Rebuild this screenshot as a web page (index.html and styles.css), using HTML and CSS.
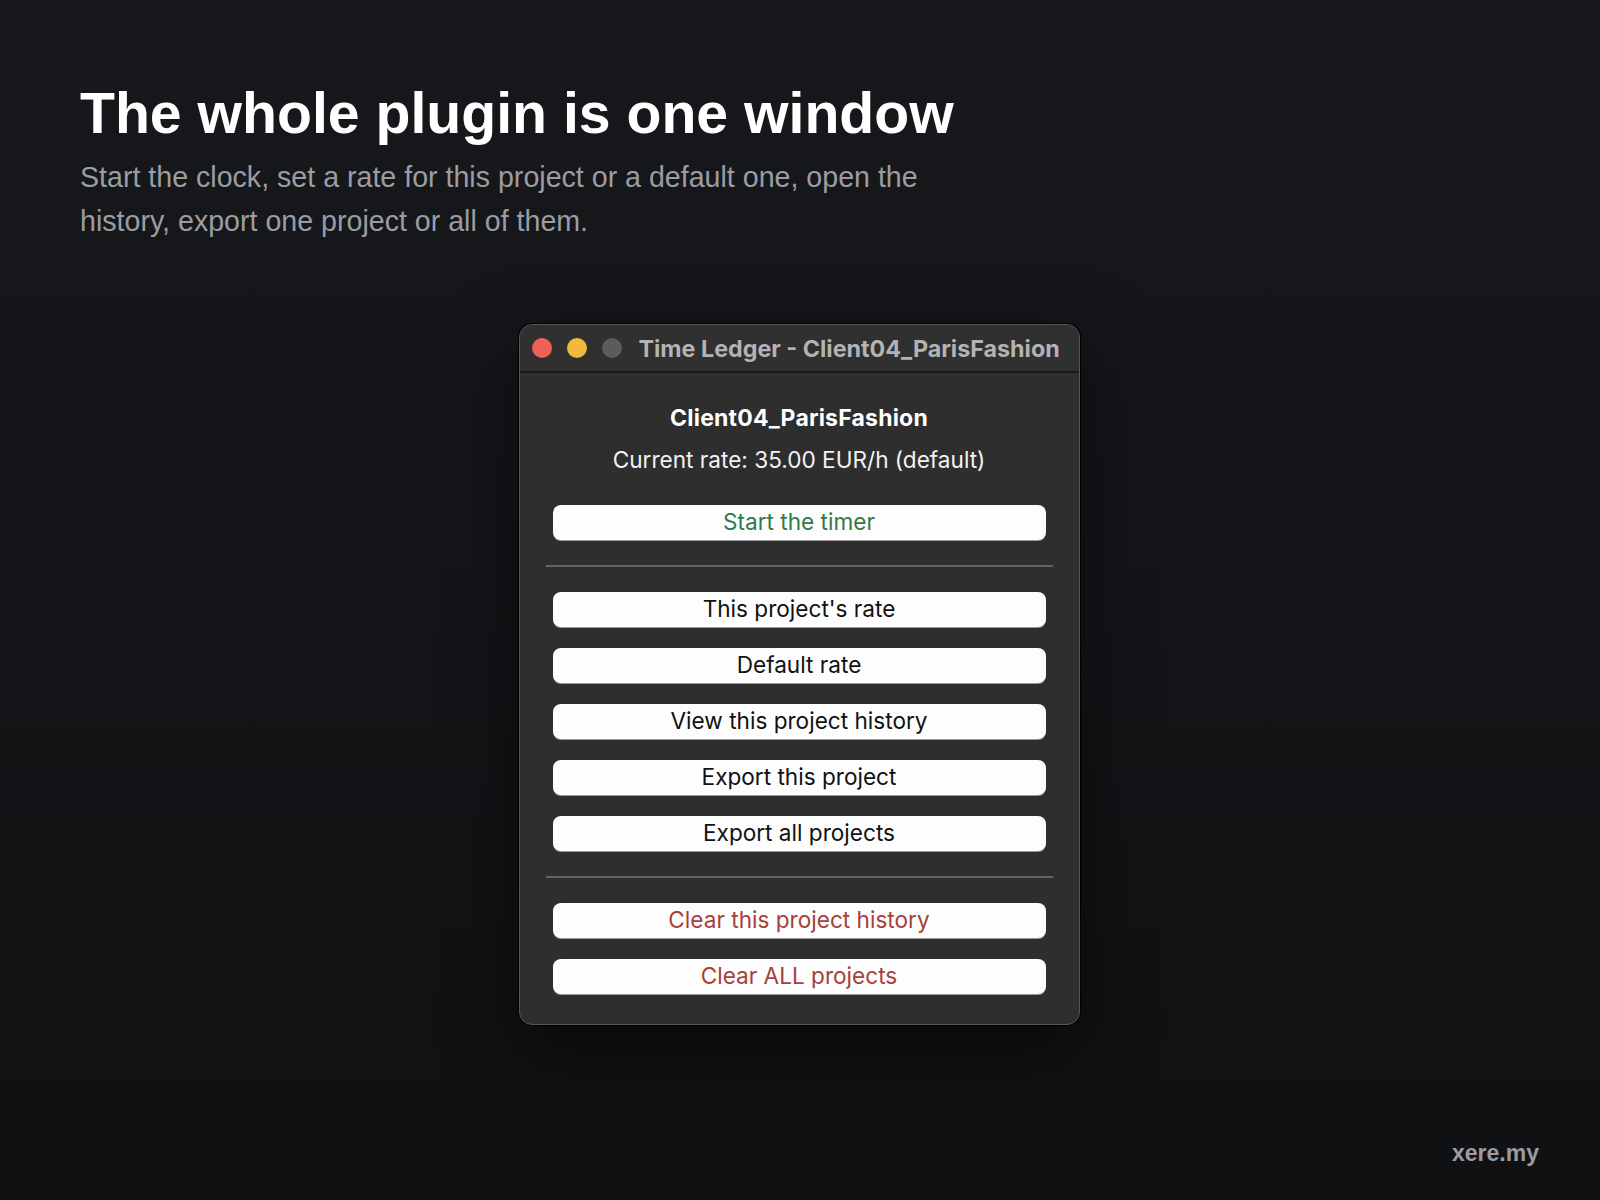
FILE: index.html
```html
<!DOCTYPE html>
<html lang="en">

<head>
  <meta charset="UTF-8">
  <meta name="viewport" content="width=device-width, initial-scale=1.0">
  <title>Time Ledger</title>
  <link rel="stylesheet" href="styles.css">
</head>

<body>
  <div class="page">
    <header class="intro">
      <h1 class="headline">The whole plugin is one window</h1>
      <p class="lead">Start the clock, set a rate for this project or a default one, open the history, export one project or all of them.</p>
    </header>

    <div class="stage">
      <div class="window">
        <div class="titlebar">
          <span class="light red"></span>
          <span class="light yellow"></span>
          <span class="light off"></span>
          <span class="window-title">Time Ledger - Client04_ParisFashion</span>
        </div>
        <div class="panel">
          <div class="project">Client04_ParisFashion</div>
          <div class="rate">Current rate: 35.00 EUR/h (default)</div>

          <button class="btn start">Start the timer</button>
          <hr class="sep">

          <div class="group">
            <button class="btn">This project's rate</button>
            <button class="btn">Default rate</button>
            <button class="btn">View this project history</button>
            <button class="btn">Export this project</button>
            <button class="btn">Export all projects</button>
          </div>
          <hr class="sep">

          <div class="group">
            <button class="btn danger">Clear this project history</button>
            <button class="btn danger">Clear ALL projects</button>
          </div>
        </div>
      </div>
    </div>

    <footer class="brand">xere.my</footer>
  </div>
</body>

</html>
```

FILE: styles.css
```css
html,
body {
  height: 100%;
}

body {
  margin: 0;
  background: linear-gradient(180deg, #17181c 0%, #141518 50%, #101112 100%);
  font-family: "Liberation Sans", Arial, sans-serif;
  color: #fff;
}

.page {
  position: relative;
  height: 1200px;
  box-sizing: border-box;
  padding: 82px 80px 0;
}

.headline {
  margin: 0;
  font-size: 57.2px;
  line-height: 63px;
  font-weight: 700;
}

.lead {
  margin: 10px 0 0;
  max-width: 900px;
  font-size: 28.6px;
  line-height: 44px;
  color: #9b9da2;
}

.stage {
  display: flex;
  justify-content: center;
  margin-top: 81px;
  margin-left: -82px;
  margin-right: -80px;
}

/* app window */
.window {
  width: 561px;
  box-sizing: border-box;
  background: #2e2e2e;
  border: 1px solid #575757;
  border-radius: 13px;
  box-shadow: 0 24px 70px rgba(0, 0, 0, 0.55), 0 0 0 1px #000;
  font-family: Inter, "Noto Sans", sans-serif;
  overflow: hidden;
}

.titlebar {
  display: flex;
  align-items: center;
  height: 46px;
  padding-left: 12px;
  background: #303030;
  border-bottom: 2px solid #191919;
}

.light {
  width: 20px;
  height: 20px;
  border-radius: 50%;
  margin-right: 15px;
  flex: none;
}

.light.red {
  background: #ec6258;
}

.light.yellow {
  background: #f3b93f;
}

.light.off {
  background: #5b5b5b;
  margin-right: 17px;
}

.window-title {
  font-size: 23.3px;
  font-weight: 700;
  color: #b3b3b3;
  white-space: nowrap;
}

.panel {
  display: flex;
  flex-direction: column;
  padding: 31px 33px 30px;
}

.project {
  text-align: center;
  font-size: 23px;
  line-height: 28px;
  font-weight: 700;
  letter-spacing: 0.2px;
}

.rate {
  margin-top: 14px;
  text-align: center;
  font-size: 22.6px;
  line-height: 28px;
  color: #f2f2f2;
}

.group {
  display: flex;
  flex-direction: column;
  gap: 21px;
}

.btn {
  height: 35px;
  border: none;
  border-radius: 8px;
  background: #fdfdfd;
  box-shadow: 0 1px 0 #9a9a9a;
  color: #111;
  font-family: inherit;
  font-size: 22.6px;
  padding: 0 0 3px;
}

.btn.start {
  margin-top: 31px;
  color: #2f7b47;
}

.btn.danger {
  color: #a6413a;
}

.sep {
  margin: 25px -7px;
  border: none;
  height: 2px;
  background: #636363;
}

.brand {
  position: absolute;
  right: 61px;
  bottom: 33px;
  font-size: 23px;
  font-weight: 700;
  color: #9a9ca2;
}
```
